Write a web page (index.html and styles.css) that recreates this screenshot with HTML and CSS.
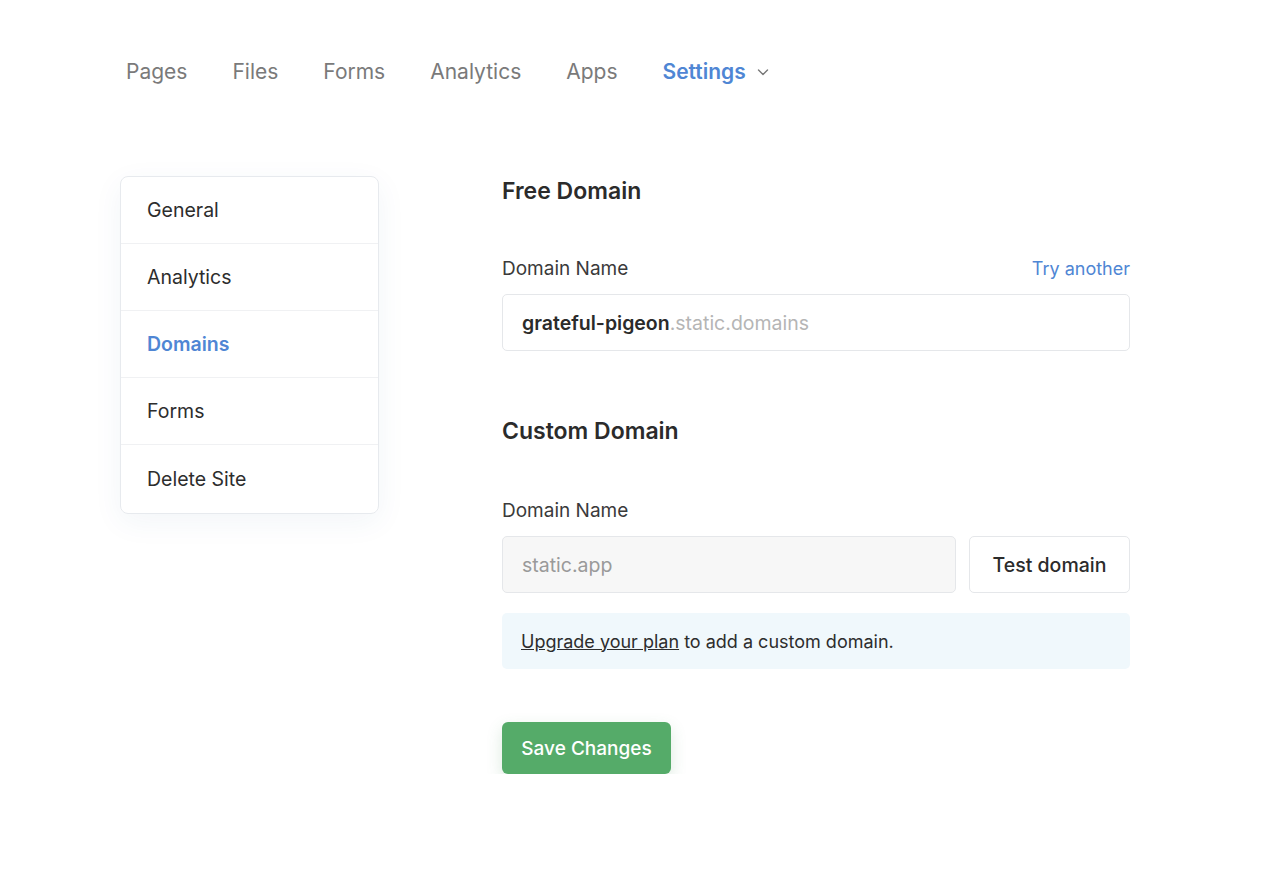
FILE: index.html
```html
<!DOCTYPE html>
<html>
<head>
<meta charset="utf-8">
<link rel="stylesheet" href="styles.css">
</head>
<body>
<nav class="topnav">
  <a class="nav-item">Pages</a>
  <a class="nav-item">Files</a>
  <a class="nav-item">Forms</a>
  <a class="nav-item">Analytics</a>
  <a class="nav-item">Apps</a>
  <a class="nav-item active">Settings
    <svg class="chev" width="14" height="14" viewBox="0 0 14 14"><path d="M2.5 5 L7 9.5 L11.5 5" fill="none" stroke="#777" stroke-width="1.4" stroke-linecap="round" stroke-linejoin="round"/></svg>
  </a>
</nav>
<div class="layout">
  <aside class="sidebar">
    <div class="side-item">General</div>
    <div class="side-item">Analytics</div>
    <div class="side-item active">Domains</div>
    <div class="side-item">Forms</div>
    <div class="side-item">Delete Site</div>
  </aside>
  <main class="content">
    <h2 class="section-title">Free Domain</h2>
    <div class="label-row">
      <span class="label">Domain Name</span>
      <a class="link">Try another</a>
    </div>
    <div class="input"><b>grateful-pigeon</b><span class="muted">.static.domains</span></div>

    <h2 class="section-title custom">Custom Domain</h2>
    <div class="label-row second"><span class="label">Domain Name</span></div>
    <div class="input-row">
      <div class="input disabled">static.app</div>
      <button class="btn-test">Test domain</button>
    </div>
    <div class="notice"><a class="ulink">Upgrade your plan</a> to add a custom domain.</div>
    <button class="btn-save">Save Changes</button>
  </main>
</div>
</body>
</html>
```
FILE: styles.css
```css
* { box-sizing: border-box; }
html, body { margin: 0; padding: 0; background: #fff; }
body {
  font-family: Inter, "Noto Sans", sans-serif;
  color: #2b2b2b;
}
.topnav {
  display: flex;
  align-items: center;
  gap: 45px;
  padding: 57px 0 0 126px;
  height: 87px;
}
.nav-item {
  font-size: 21px;
  color: #7a7a7a;
  line-height: 30px;
  display: flex;
  align-items: center;
}
.nav-item.active {
  color: #4f86d4;
  font-weight: 600;
}
.chev { margin-left: 10px; }
.layout {
  display: flex;
  padding: 89px 0 0 120px;
}
.sidebar {
  width: 259px;
  border: 1px solid #e7eaee;
  border-radius: 8px;
  box-shadow: 0 8px 30px rgba(40, 80, 140, 0.06);
  align-self: flex-start;
  overflow: hidden;
}
.side-item {
  height: 67px;
  display: flex;
  align-items: center;
  padding-left: 26px;
  font-size: 19.5px;
  color: #2d2d2d;
  border-top: 1px solid #f0f1f3;
}
.side-item:first-child { border-top: none; height: 66px; }
.side-item:last-child { height: 69px; }
.side-item.active { color: #4f86d4; font-weight: 600; }
.content {
  margin-left: 123px;
  width: 628px;
}
.section-title {
  margin: 0;
  font-size: 23px;
  font-weight: 600;
  color: #2b2b2b;
  line-height: 30px;
}
.section-title.custom { margin-top: 65px; }
.label-row {
  display: flex;
  justify-content: space-between;
  align-items: center;
  margin-top: 50px;
  line-height: 26px;
}
.label-row.second { margin-top: 52px; }
.label { font-size: 19px; color: #3a3a3a; }
.link { font-size: 18px; color: #4f86d4; }
.input {
  margin-top: 12px;
  height: 57px;
  border: 1px solid #e5e7ea;
  border-radius: 5px;
  display: flex;
  align-items: center;
  padding-left: 19px;
  font-size: 19.5px;
}
.input b { font-weight: 600; color: #2b2b2b; }
.input .muted { color: #b5b5b5; }
.input-row {
  display: flex;
  gap: 13px;
  margin-top: 12px;
}
.input-row .input { margin-top: 0; flex: 1; background: #f7f7f7; color: #9a9a9a; }
.btn-test {
  width: 161px;
  height: 57px;
  background: #fff;
  border: 1px solid #e5e7ea;
  border-radius: 5px;
  font-family: inherit;
  font-size: 19.5px;
  color: #2b2b2b;
  font-weight: 500;
}
.notice {
  margin-top: 20px;
  height: 56px;
  background: #f0f8fc;
  border-radius: 5px;
  display: flex;
  align-items: center;
  padding-left: 19px;
  font-size: 18px;
  color: #2d2d2d;
  white-space: pre;
}
.ulink { text-decoration: underline; color: #2d2d2d; }
.btn-save {
  display: block;
  margin-top: 53px;
  width: 169px;
  height: 52px;
  background: #55ab69;
  color: #fff;
  border: none;
  border-radius: 6px;
  font-family: inherit;
  font-size: 19px;
  font-weight: 500;
  box-shadow: 0 6px 16px rgba(60, 140, 80, 0.18);
}
```
